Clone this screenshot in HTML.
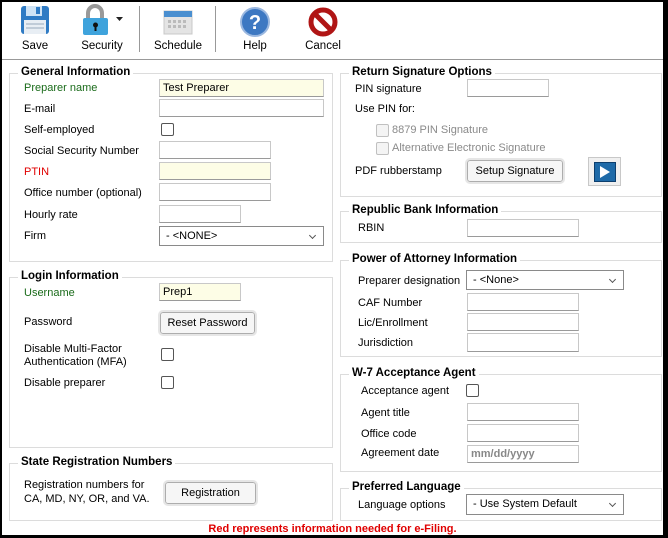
<!DOCTYPE html><html><head><style>
body{margin:0;width:668px;height:538px;overflow:hidden;background:#000;font-family:"Liberation Sans",sans-serif;font-size:11px;color:#000}
#w{position:absolute;left:2px;top:2px;width:661px;height:533px;background:#fff}
.a{position:absolute;white-space:nowrap}
.g{position:absolute;border:1px solid #dcdcdc}
.t{position:absolute;left:8px;top:-8px;background:#fff;padding:0 3px;font-weight:bold;font-size:11.5px}
.i{position:absolute;border:1px solid #c8c8c8;border-bottom-color:#9a9a9a;background:#fff;box-sizing:border-box;height:18px;padding:2px 3px;font-size:11px}
.y{background:#fdfde6}
.cb{position:absolute;width:11px;height:11px;border:1px solid #555;border-radius:2px;background:#fff}
.cd{border-color:#c0c0c0;background:#f4f4f4}
.b{position:absolute;border:1px solid #adadad;background:#f6f6f6;border-radius:3px;box-sizing:border-box;text-align:center;font-size:11px;outline:2px solid #e6e6e6}
.s{position:absolute;border:1px solid #8a8a8a;background:#fff;box-sizing:border-box;padding:3px 6px 0;font-size:11px}
.s:after{content:"";position:absolute;right:8px;top:6px;width:4px;height:4px;border-right:1px solid #555;border-bottom:1px solid #555;transform:rotate(45deg)}
.red{color:#e00000}.grn{color:#1a6b1a}
.tl{position:absolute;text-align:center;width:60px;font-size:11.5px}
</style></head><body><div id="w">
<svg class="a" style="left:18px;top:3px" width="30" height="32" viewBox="0 0 30 32"><rect x="1" y="1" width="28" height="28" rx="3" fill="#2f7bc4"/><rect x="6" y="1" width="16" height="10" fill="#cfe3f5"/><rect x="16" y="2" width="4" height="7" fill="#2f7bc4"/><rect x="4" y="15" width="22" height="14" fill="#e8eef4"/><line x1="6" y1="19" x2="24" y2="19" stroke="#9ab" /><line x1="6" y1="23" x2="24" y2="23" stroke="#9ab"/></svg>
<div class="tl" style="left:3px;top:38px">Save</div>
<svg class="a" style="left:78px;top:2px" width="44" height="34" viewBox="0 0 44 34"><path d="M8 15V9a7 7 0 0 1 14 0v6" fill="none" stroke="#999" stroke-width="4"/><rect x="3" y="14" width="25" height="17" rx="2" fill="#3fa3dc"/><circle cx="15.5" cy="21" r="2.5" fill="#111"/><rect x="14.5" y="22" width="2" height="5" fill="#111"/><path d="M36 13h7l-3.5 4z" fill="#222"/></svg>
<div class="tl" style="left:70px;top:38px">Security</div>
<div class="a" style="left:137px;top:4px;width:1px;height:46px;background:#999"></div>
<svg class="a" style="left:161px;top:6px" width="30" height="28" viewBox="0 0 30 28"><rect x="1" y="3" width="28" height="23" fill="#e4e4e4" stroke="#c8c8c8"/><rect x="1" y="3" width="28" height="6" fill="#4a8fd0"/><g fill="#bbb"><rect x="5" y="12" width="3" height="3"/><rect x="10" y="12" width="3" height="3"/><rect x="15" y="12" width="3" height="3"/><rect x="20" y="12" width="3" height="3"/><rect x="5" y="17" width="3" height="3"/><rect x="10" y="17" width="3" height="3"/><rect x="15" y="17" width="3" height="3"/><rect x="20" y="17" width="3" height="3"/></g></svg>
<div class="tl" style="left:146px;top:38px">Schedule</div>
<div class="a" style="left:213px;top:4px;width:1px;height:46px;background:#999"></div>
<svg class="a" style="left:237px;top:4px" width="32" height="32" viewBox="0 0 32 32"><circle cx="16" cy="16" r="14" fill="#3d78c2" stroke="#9bb8e0" stroke-width="2"/><text x="16" y="23" text-anchor="middle" fill="#fff" font-weight="bold" font-size="20" font-family="Liberation Sans">?</text></svg>
<div class="tl" style="left:223px;top:38px">Help</div>
<svg class="a" style="left:305px;top:4px" width="32" height="32" viewBox="0 0 32 32"><circle cx="16" cy="16" r="12" fill="none" stroke="#b01515" stroke-width="5"/><line x1="8" y1="8" x2="24" y2="24" stroke="#b01515" stroke-width="5"/></svg>
<div class="tl" style="left:291px;top:38px">Cancel</div>
<div class="a" style="left:0;top:57px;width:661px;height:1px;background:#999"></div>

<div class="g" style="left:7px;top:71px;width:322px;height:187px"><div class="t">General Information</div></div>
<div class="a grn" style="left:22px;top:80px">Preparer name</div><div class="i y" style="left:157px;top:77px;width:165px">Test Preparer</div>
<div class="a" style="left:22px;top:101px">E-mail</div><div class="i" style="left:157px;top:97px;width:165px"></div>
<div class="a" style="left:22px;top:122px">Self-employed</div><div class="cb" style="left:159px;top:121px"></div>
<div class="a" style="left:22px;top:143px">Social Security Number</div><div class="i" style="left:157px;top:139px;width:112px"></div>
<div class="a red" style="left:22px;top:164px">PTIN</div><div class="i y" style="left:157px;top:160px;width:112px"></div>
<div class="a" style="left:22px;top:185px">Office number (optional)</div><div class="i" style="left:157px;top:181px;width:112px"></div>
<div class="a" style="left:22px;top:207px">Hourly rate</div><div class="i" style="left:157px;top:203px;width:82px"></div>
<div class="a" style="left:22px;top:228px">Firm</div><div class="s" style="left:157px;top:224px;width:165px;height:20px">- &lt;NONE&gt;</div>
<div class="g" style="left:7px;top:275px;width:322px;height:169px"><div class="t">Login Information</div></div>
<div class="a grn" style="left:22px;top:285px">Username</div><div class="i y" style="left:157px;top:281px;width:82px">Prep1</div>
<div class="a" style="left:22px;top:314px">Password</div><div class="b" style="left:158px;top:310px;width:95px;height:22px;line-height:20px">Reset Password</div>
<div class="a" style="left:22px;top:341px;line-height:13px">Disable Multi-Factor<br>Authentication (MFA)</div><div class="cb" style="left:159px;top:346px"></div>
<div class="a" style="left:22px;top:375px">Disable preparer</div><div class="cb" style="left:159px;top:374px"></div>
<div class="g" style="left:7px;top:461px;width:322px;height:56px"><div class="t">State Registration Numbers</div></div>
<div class="a" style="left:22px;top:476px;line-height:14px">Registration numbers for<br>CA, MD, NY, OR, and VA.</div>
<div class="b" style="left:163px;top:480px;width:91px;height:22px;line-height:20px">Registration</div>

<div class="g" style="left:338px;top:71px;width:320px;height:122px"><div class="t">Return Signature Options</div></div>
<div class="a" style="left:353px;top:81px">PIN signature</div><div class="i" style="left:465px;top:77px;width:82px"></div>
<div class="a" style="left:353px;top:101px">Use PIN for:</div>
<div class="cb cd" style="left:374px;top:122px"></div><div class="a" style="left:390px;top:122px;color:#8a8a8a">8879 PIN Signature</div>
<div class="cb cd" style="left:374px;top:140px"></div><div class="a" style="left:390px;top:140px;color:#8a8a8a">Alternative Electronic Signature</div>
<div class="a" style="left:353px;top:163px">PDF rubberstamp</div><div class="b" style="left:465px;top:158px;width:96px;height:22px;line-height:20px">Setup Signature</div>
<div class="a" style="left:586px;top:155px;width:31px;height:27px;border:1px solid #c8c8c8;background:#f0f0f0"><div class="a" style="left:5px;top:4px;width:20px;height:18px;background:#1e6aa8;border:1px solid #0d3f6e"></div><svg class="a" style="left:10px;top:8px" width="12" height="12"><path d="M1 0L11 6L1 12z" fill="#fff"/></svg></div>
<div class="g" style="left:338px;top:209px;width:320px;height:30px"><div class="t">Republic Bank Information</div></div>
<div class="a" style="left:356px;top:220px">RBIN</div><div class="i" style="left:465px;top:217px;width:112px"></div>
<div class="g" style="left:338px;top:258px;width:320px;height:95px"><div class="t">Power of Attorney Information</div></div>
<div class="a" style="left:356px;top:273px">Preparer designation</div><div class="s" style="left:464px;top:268px;width:158px;height:20px">- &lt;None&gt;</div>
<div class="a" style="left:356px;top:295px">CAF Number</div><div class="i" style="left:465px;top:291px;width:112px"></div>
<div class="a" style="left:356px;top:315px">Lic/Enrollment</div><div class="i" style="left:465px;top:311px;width:112px"></div>
<div class="a" style="left:356px;top:335px">Jurisdiction</div><div class="i" style="left:465px;top:331px;width:112px;height:19px"></div>
<div class="g" style="left:338px;top:372px;width:320px;height:96px"><div class="t">W-7 Acceptance Agent</div></div>
<div class="a" style="left:359px;top:383px">Acceptance agent</div><div class="cb" style="left:464px;top:382px"></div>
<div class="a" style="left:359px;top:405px">Agent title</div><div class="i" style="left:465px;top:401px;width:112px"></div>
<div class="a" style="left:359px;top:426px">Office code</div><div class="i" style="left:465px;top:422px;width:112px"></div>
<div class="a" style="left:359px;top:445px">Agreement date</div><div class="i" style="left:465px;top:443px;width:112px;color:#888;font-weight:bold">mm/dd/yyyy</div>
<div class="g" style="left:338px;top:486px;width:320px;height:31px"><div class="t">Preferred Language</div></div>
<div class="a" style="left:356px;top:497px">Language options</div><div class="s" style="left:464px;top:492px;width:158px;height:21px">- Use System Default</div>

<div class="a red" style="left:0;width:661px;text-align:center;top:521px;font-weight:bold">Red represents information needed for e-Filing.</div>
</div></body></html>
